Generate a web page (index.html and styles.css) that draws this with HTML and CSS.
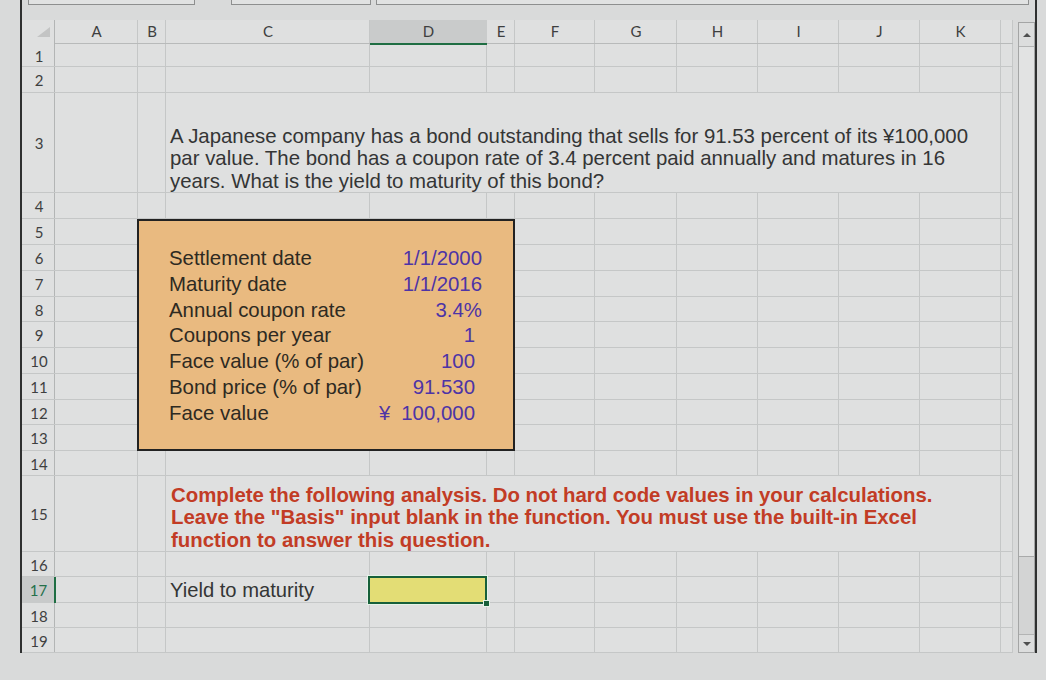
FILE: index.html
```html
<!DOCTYPE html>
<html>
<head>
<meta charset="utf-8">
<title>Bond yield</title>
<link rel="stylesheet" href="styles.css">
</head>
<body>
<div class="screen">
  <div class="lgap"></div>
  <div class="edge"></div>
  <div class="center">
    <div class="topbar">
      <div class="tb tb1"></div>
      <div class="tb tb2"></div>
      <div class="tb tb3"></div>
    </div>
    <div class="work">
      <div class="sheet">
        <!-- grid lines -->
        <div class="vl vh"></div>
        <div class="vl cA"></div><div class="vl cB"></div><div class="vl cC"></div><div class="vl cD"></div>
        <div class="vl cE"></div><div class="vl cF"></div><div class="vl cG"></div><div class="vl cH"></div>
        <div class="vl cI"></div><div class="vl cJ"></div><div class="vl cK"></div><div class="vl cX"></div>
        <div class="hl hh"></div>
        <div class="hl r1"></div><div class="hl r2"></div><div class="hl r3"></div><div class="hl r4"></div>
        <div class="hl r5"></div><div class="hl r6"></div><div class="hl r7"></div><div class="hl r8"></div>
        <div class="hl r9"></div><div class="hl r10"></div><div class="hl r11"></div><div class="hl r12"></div>
        <div class="hl r13"></div><div class="hl r14"></div><div class="hl r15"></div><div class="hl r16"></div>
        <div class="hl r17"></div><div class="hl r18"></div><div class="hl r19"></div>

        <!-- headers -->
        <div class="corner"><span class="tri"></span></div>
        <div class="ch cA">A</div>
        <div class="ch cB">B</div>
        <div class="ch cC">C</div>
        <div class="ch cD sel">D</div>
        <div class="ch cE">E</div>
        <div class="ch cF">F</div>
        <div class="ch cG">G</div>
        <div class="ch cH">H</div>
        <div class="ch cI">I</div>
        <div class="ch cJ">J</div>
        <div class="ch cK">K</div>

        <div class="rh r1">1</div>
        <div class="rh r2">2</div>
        <div class="rh r3">3</div>
        <div class="rh r4">4</div>
        <div class="rh r5">5</div>
        <div class="rh r6">6</div>
        <div class="rh r7">7</div>
        <div class="rh r8">8</div>
        <div class="rh r9">9</div>
        <div class="rh r10">10</div>
        <div class="rh r11">11</div>
        <div class="rh r12">12</div>
        <div class="rh r13">13</div>
        <div class="rh r14">14</div>
        <div class="rh r15">15</div>
        <div class="rh r16">16</div>
        <div class="rh r17 sel">17</div>
        <div class="rh r18">18</div>
        <div class="rh r19">19</div>

        <!-- content -->
        <div class="question r3">
          <p>A Japanese company has a bond outstanding that sells for 91.53 percent of its ¥100,000<br>par value. The bond has a coupon rate of 3.4 percent paid annually and matures in 16<br>years. What is the yield to maturity of this bond?</p>
        </div>

        <div class="inputs"></div>
        <div class="lbl r6">Settlement date</div>
        <div class="val r6">1/1/2000</div>
        <div class="lbl r7">Maturity date</div>
        <div class="val r7">1/1/2016</div>
        <div class="lbl r8">Annual coupon rate</div>
        <div class="val r8">3.4%</div>
        <div class="lbl r9">Coupons per year</div>
        <div class="val num r9">1</div>
        <div class="lbl r10">Face value (% of par)</div>
        <div class="val num r10">100</div>
        <div class="lbl r11">Bond price (% of par)</div>
        <div class="val num r11">91.530</div>
        <div class="lbl r12">Face value</div>
        <div class="val num cur r12"><span class="yen">¥</span><span>100,000</span></div>

        <div class="note r15">
          <p>Complete the following analysis. Do not hard code values in your calculations.<br>Leave the "Basis" input blank in the function. You must use the built-in Excel<br>function to answer this question.</p>
        </div>

        <div class="plain r17">Yield to maturity</div>
        <div class="answer r17"><span class="handle"></span></div>
      </div>
      <div class="scroll">
        <div class="sb-btn up"><span class="arr-up"></span></div>
        <div class="thumb"></div>
        <div class="track"></div>
        <div class="sb-btn down"><span class="arr-down"></span></div>
      </div>
    </div>
  </div>
  <div class="edge edge-r"></div>
</div>
</body>
</html>
```

FILE: styles.css
```css
* {
  box-sizing: border-box;
  margin: 0;
  padding: 0;
}

html, body {
  width: 1046px;
  height: 680px;
  overflow: hidden;
}

body {
  background: #d9dada;
  font-family: "Liberation Sans", Arial, sans-serif;
  color: #333;
}

.screen {
  display: flex;
  height: 680px;
}

.lgap {
  width: 20px;
}

.edge {
  width: 2px;
  height: 653px;
  background: #2f3030;
}

.center {
  width: 1013px;
  display: flex;
  flex-direction: column;
}

/* remains of the formula bar */
.topbar {
  height: 20px;
  display: flex;
  align-items: flex-start;
}

.tb {
  height: 5px;
  border: 1px solid #8e8f8f;
  border-top: none;
  background: #e1e2e2;
}

.tb1 { margin-left: 6px; width: 167px; }
.tb2 { margin-left: 36px; width: 140px; }
.tb3 { margin-left: 5px; width: 653px; }

.work {
  display: flex;
  gap: 5px;
}

/* spreadsheet grid */
.sheet {
  display: grid;
  grid-template-columns: 33px 83px 28px 204px 117px 28px 80px 82px 81px 81px 81px 81px 12px;
  grid-template-rows: 24px 23px 26px 100px 26px 26px 26px 26px 25px 26px 26px 26px 25px 26px 25px 76px 25px 26px 25px 25px;
  background: #dfe0e0;
}

.vl { grid-row: 1 / -1; border-right: 1px solid #c5c7c7; }
.vh { grid-column: 1; border-right-color: #b3b5b5; }
.hl { grid-column: 1 / -1; border-bottom: 1px solid #c5c7c7; }
.hh { grid-row: 1; grid-column: 2 / -1; border-bottom-color: #b8baba; }

.cA { grid-column: 2; }
.cB { grid-column: 3; }
.cC { grid-column: 4; }
.cD { grid-column: 5; }
.cE { grid-column: 6; }
.cF { grid-column: 7; }
.cG { grid-column: 8; }
.cH { grid-column: 9; }
.cI { grid-column: 10; }
.cJ { grid-column: 11; }
.cK { grid-column: 12; }
.cX { grid-column: 13; }

.r1 { grid-row: 2; }
.r2 { grid-row: 3; }
.r3 { grid-row: 4; }
.r4 { grid-row: 5; }
.r5 { grid-row: 6; }
.r6 { grid-row: 7; }
.r7 { grid-row: 8; }
.r8 { grid-row: 9; }
.r9 { grid-row: 10; }
.r10 { grid-row: 11; }
.r11 { grid-row: 12; }
.r12 { grid-row: 13; }
.r13 { grid-row: 14; }
.r14 { grid-row: 15; }
.r15 { grid-row: 16; }
.r16 { grid-row: 17; }
.r17 { grid-row: 18; }
.r18 { grid-row: 19; }
.r19 { grid-row: 20; }

.corner {
  grid-row: 1;
  grid-column: 1;
  display: flex;
  justify-content: flex-end;
  align-items: flex-end;
  padding: 0 5px 7px 0;
}

.tri {
  width: 0;
  height: 0;
  border-left: 13px solid transparent;
  border-bottom: 10px solid #c3c4c4;
}

.ch {
  grid-row: 1;
  display: flex;
  align-items: center;
  justify-content: center;
  font-family: "Lato", "Open Sans", sans-serif;
  font-size: 15px;
  color: #3e3f3f;
  padding-bottom: 2px;
}

.ch.sel {
  background: #c9cbcb;
  border-bottom: 2px solid #1f6e43;
  margin-bottom: -1px;
}

.rh {
  grid-column: 1;
  display: flex;
  align-items: center;
  justify-content: center;
  font-family: "Lato", "Open Sans", sans-serif;
  font-size: 15px;
  color: #3e3f3f;
  padding-left: 1px;
}

.rh.sel {
  background: #c8caca;
  color: #24704a;
  border-right: 2px solid #1f6e43;
  margin-right: -1px;
}

/* merged text cells */
.question,
.note {
  grid-column: 4 / 13;
  background: #dfe0e0;
  margin: 0 1px 1px 0;
  display: flex;
  align-items: flex-end;
  white-space: nowrap;
}

.question {
  padding-left: 4px;
  font-size: 20.4px;
  line-height: 22.5px;
  color: #343535;
}

.note {
  padding-left: 5px;
  font-size: 20.4px;
  line-height: 22.5px;
  font-weight: bold;
  color: #c23c25;
}

/* input block */
.inputs {
  grid-column: 3 / 7;
  grid-row: 6 / 15;
  margin: 0 0 0 -1px;
  background: #e9ba80;
  border: 2px solid #222;
}

.lbl {
  grid-column: 4;
  padding: 1px 0 0 3px;
  font-size: 20.4px;
  line-height: 25px;
  color: #2e2a22;
  white-space: nowrap;
}

.val {
  grid-column: 5;
  padding: 1px 5px 0 0;
  text-align: right;
  font-size: 20.4px;
  line-height: 25px;
  color: #4d34a6;
  white-space: nowrap;
}

.val.num { padding-right: 12px; }

.val.cur {
  display: flex;
  justify-content: space-between;
  padding-left: 9px;
}

/* answer row */
.plain {
  grid-column: 4;
  padding: 1px 0 0 4px;
  font-size: 20.2px;
  line-height: 25px;
  color: #343535;
  white-space: nowrap;
}

.answer {
  grid-column: 5;
  position: relative;
  margin: -1px 0 -1px -2px;
  background: #e3dd75;
  border: 2px solid #17603a;
  box-shadow: 0 0 0 1px #e6f3e8;
}

.handle {
  position: absolute;
  right: -5px;
  bottom: -5px;
  width: 7px;
  height: 7px;
  background: #17603a;
  border: 1px solid #e6f3e8;
}

/* vertical scrollbar */
.scroll {
  width: 17px;
  height: 631px;
  margin-top: 2px;
  display: flex;
  flex-direction: column;
  border: 1px solid #a4a5a5;
  background: #d3d4d4;
}

.sb-btn {
  display: flex;
  align-items: center;
  justify-content: center;
  background: #dcdddd;
}

.sb-btn.up {
  height: 24px;
  border-bottom: 1px solid #b3b4b4;
}

.sb-btn.down {
  height: 18px;
  border-top: 1px solid #b3b4b4;
}

.thumb {
  height: 510px;
  background: #e2e3e3;
  border-bottom: 1px solid #a9aaaa;
}

.track {
  flex: 1;
}

.arr-up {
  width: 0;
  height: 0;
  border-left: 4px solid transparent;
  border-right: 4px solid transparent;
  border-bottom: 4px solid #4f5050;
}

.arr-down {
  width: 0;
  height: 0;
  border-left: 4px solid transparent;
  border-right: 4px solid transparent;
  border-top: 4px solid #4f5050;
}
```
